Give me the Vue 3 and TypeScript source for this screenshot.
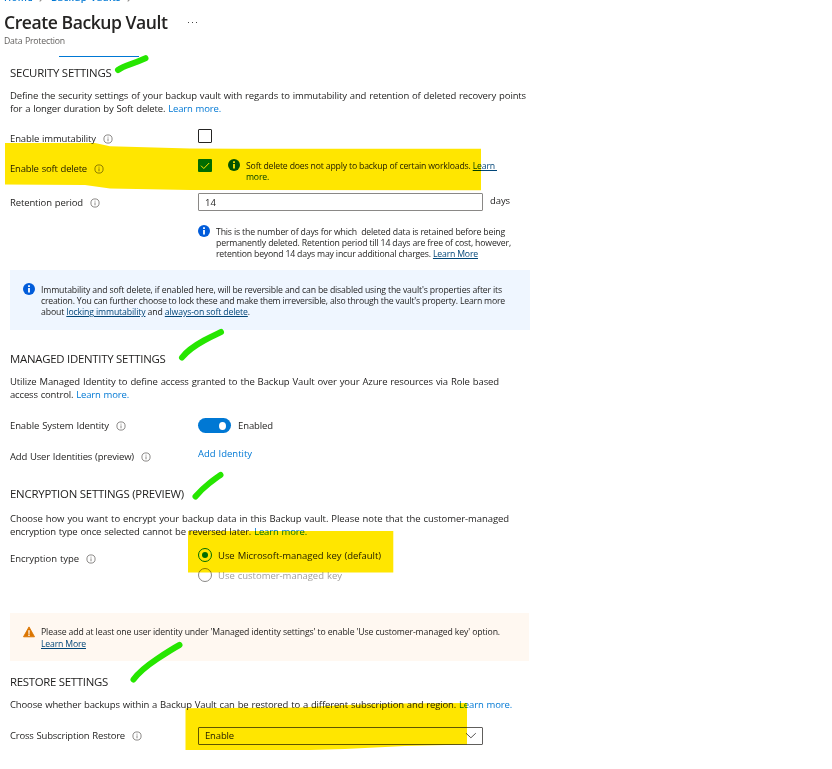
<script setup lang="ts">
import { ref, h, type Directive, type FunctionalComponent } from 'vue'

// Tracks a single text line so that it fills the given measure in pixels.
const vFit: Directive<HTMLElement, number> = {
  mounted(el, { value }) {
    const count = (el.textContent ?? '').length
    const natural = el.getBoundingClientRect().width
    if (count) el.style.letterSpacing = `${((value - natural) / count).toFixed(4)}px`
  },
}

const Hint: FunctionalComponent = () =>
  h('svg', { width: 10, height: 10, viewBox: '0 0 10 10', fill: 'none', stroke: '#6e6c6a' }, [
    h('circle', { cx: 5, cy: 5, r: 4.1, 'stroke-width': 0.8 }),
    h('path', { d: 'M5 4.4v2.9M5 2.7v.9', 'stroke-width': 0.8 }),
  ])

const Info: FunctionalComponent = () =>
  h('svg', { width: 12, height: 12, viewBox: '0 0 12 12' }, [
    h('circle', { cx: 6, cy: 6, r: 6, fill: '#015cda' }),
    h('path', { d: 'M5.1 5h1.8v4.6H5.1zM5.1 2.3h1.8v1.7H5.1z', fill: '#fff' }),
  ])

const immutable = ref(false)
const softDelete = ref(true)
const identity = ref(true)
const days = ref('14')
const keyType = ref<'microsoft' | 'customer'>('microsoft')
</script>

<template>
  <main class="page">
    <header class="head">
      <nav class="crumbs">
        <a v-fit="29">Home</a><i></i><a v-fit="70">Backup Vaults</a><i></i>
      </nav>
      <div class="title-row">
        <h1><span v-fit="163.5">Create Backup Vault</span></h1>
        <span class="more"><b></b><b></b><b></b></span>
      </div>
      <p class="sub"><span v-fit="61">Data Protection</span></p>
      <div class="tab"></div>
    </header>

    <section class="security">
      <h2><span v-fit="101.5">SECURITY SETTINGS</span></h2>
      <p class="para">
        <span v-fit="516">Define the security settings of your backup vault with regards to immutability and retention of deleted recovery points</span>
        <span v-fit="211">for a longer duration by Soft delete. <a>Learn more.</a></span>
      </p>
      <div class="row r-immutable">
        <label><span v-fit="86">Enable immutability</span><Hint /></label>
        <button class="check" :class="{ on: immutable }" @click="immutable = !immutable"></button>
      </div>
      <div class="row r-soft">
        <label><span v-fit="77">Enable soft delete</span><Hint /></label>
        <div class="control">
          <button class="check" :class="{ on: softDelete }" @click="softDelete = !softDelete">
            <svg v-if="softDelete" width="14" height="13" viewBox="0 0 14 13"><path d="M3 6.700l2.800 2.800L11.200 4" fill="none" stroke="#fff" /></svg>
          </button>
          <Info class="soft-info" />
          <p class="note">
            <span v-fit="251">Soft delete does not apply to backup of certain workloads. <u>Learn&nbsp;</u></span>
            <span v-fit="23"><u class="plain">more.</u></span>
          </p>
        </div>
      </div>
      <div class="row r-retention">
        <label><span v-fit="73">Retention period</span><Hint /></label>
        <div class="control">
          <input v-model="days" class="field" />
          <span class="unit"><span v-fit="20">days</span></span>
        </div>
      </div>
      <div class="row r-note">
        <span></span>
        <div class="control">
          <Info />
          <p class="note">
            <span v-fit="289">This is the number of days for which &nbsp;deleted data is retained before being</span>
            <span v-fit="295">permanently deleted. Retention period till 14 days are free of cost, however,</span>
            <span v-fit="262">retention beyond 14 days may incur additional charges. <u>Learn More</u></span>
          </p>
        </div>
      </div>
      <aside class="banner info">
        <Info />
        <p class="note">
          <span v-fit="461">Immutability and soft delete, if enabled here, will be reversible and can be disabled using the vault's properties after its</span>
          <span v-fit="464">creation. You can further choose to lock these and make them irreversible, also through the vault's property. Learn more</span>
          <span v-fit="209">about <u>locking immutability</u> and <u>always-on soft delete</u>.</span>
        </p>
      </aside>
    </section>

    <section class="managed">
      <h2><span v-fit="155.5">MANAGED IDENTITY SETTINGS</span></h2>
      <p class="para">
        <span v-fit="489">Utilize Managed Identity to define access granted to the Backup Vault over your Azure resources via Role based</span>
        <span v-fit="119">access control. <a>Learn more.</a></span>
      </p>
      <div class="row r-system">
        <label><span v-fit="99">Enable System Identity</span><Hint /></label>
        <div class="control">
          <button class="toggle" :class="{ on: identity }" @click="identity = !identity"></button>
          <span class="state"><span v-fit="35">Enabled</span></span>
        </div>
      </div>
      <div class="row r-user">
        <label><span v-fit="124">Add User Identities (preview)</span><Hint /></label>
        <a class="add"><span v-fit="54">Add Identity</span></a>
      </div>
    </section>

    <section class="encryption">
      <h2><span v-fit="174">ENCRYPTION SETTINGS (PREVIEW)</span></h2>
      <p class="para">
        <span v-fit="499">Choose how you want to encrypt your backup data in this Backup vault. Please note that the customer-managed</span>
        <span v-fit="297">encryption type once selected cannot be reversed later. <a>Learn more.</a></span>
      </p>
      <div class="row r-key">
        <label><span v-fit="69">Encryption type</span><Hint /></label>
        <div class="radios">
          <div class="radio" :class="{ on: keyType === 'microsoft' }" @click="keyType = 'microsoft'">
            <i></i><span v-fit="163">Use Microsoft-managed key (default)</span>
          </div>
          <div class="radio disabled"><i></i><span v-fit="124">Use customer-managed key</span></div>
        </div>
      </div>
      <aside class="banner warn">
        <svg width="12" height="12" viewBox="0 0 12 12">
          <path d="M6 .9L11.500 10.800H.5z" fill="#db7500" stroke="#db7500" stroke-width=".9" stroke-linejoin="round" />
          <path d="M5.300 4.200h1.400L6.500 7.900h-1zM5.300 8.600h1.400v1.300H5.300z" fill="#fff" />
        </svg>
        <p class="note">
          <span v-fit="459">Please add at least one user identity under 'Managed identity settings' to enable 'Use customer-managed key' option.</span>
          <span v-fit="45"><u>Learn More</u></span>
        </p>
      </aside>
    </section>

    <section class="restore">
      <h2><span v-fit="98">RESTORE SETTINGS</span></h2>
      <p class="para">
        <span v-fit="502">Choose whether backups within a Backup Vault can be restored to a different subscription and region. <a>Learn more.</a></span>
      </p>
      <div class="row r-cross">
        <label><span v-fit="115">Cross Subscription Restore</span><Hint /></label>
        <div class="field select">
          <span v-fit="29">Enable</span>
          <svg width="12" height="8" viewBox="0 0 12 8"><path d="M1 1.200l4.900 4.600L10.800 1.200" fill="none" stroke="#5a5856" /></svg>
        </div>
      </div>
    </section>

    <svg class="marker" width="832" height="769" viewBox="0 0 832 769" fill="#ffe600">
      <path d="M5 143L95 143L110 146.300L190 148.500L240 148.700L481 148.700V190.300L190 190L110 188.500L85 185L5 184.500Z" />
      <path d="M188 531H393.300V572.500H188Z" />
      <path d="M185.500 708.300L300 707.500L345 705L400 703.500L467 703V744.500L405 746L345 749L310 750H185.500Z" />
    </svg>
    <svg class="marker pen" width="832" height="769" viewBox="0 0 832 769">
      <path d="M118 70Q122 67 130 64.300T145.500 58.200" />
      <path d="M182 357.500C187 351 194 346 204 340.500S217 334 221 332" />
      <path d="M195.500 496.500Q202 489 209 483.500T220.500 475" />
      <path d="M133.500 679.500C139 672 148 665 157 659S174 648 179.500 645" />
    </svg>
  </main>
</template>

<style>
body { margin: 0; background: #fff; }
</style>

<style scoped>
.page {
  position: relative;
  width: 832px;
  height: 769px;
  overflow: hidden;
  background: #fff;
  color: #1f1e1d;
  font: 400 9.5px/14px "Open Sans", "Noto Sans", sans-serif;
  word-spacing: 0.6px;
}
* { box-sizing: border-box; }
h1, h2, p { margin: 0; font-weight: 400; }
span { white-space: nowrap; }
svg { display: block; flex: none; }
a { color: #0078d4; cursor: pointer; }
button { padding: 0; font: inherit; }

.head { height: 57px; padding-left: 4px; display: flex; flex-direction: column; }
.crumbs { display: flex; align-items: center; height: 12px; margin-top: -8px; font-size: 9.5px; font-weight: 600; line-height: 12px; }
.crumbs a { white-space: nowrap; }
.crumbs i { width: 4px; height: 4px; margin: 1px 9px 0 5px; border: solid #8a8886; border-width: 1px 1px 0 0; transform: rotate(45deg); }
.title-row { display: flex; align-items: center; height: 26px; margin-top: 5px; word-spacing: 0; }
h1 { font-size: 17.6px; font-weight: 600; line-height: 26px; color: #252423; }
.more { display: flex; gap: 3px; margin-left: 20px; padding-top: 1px; }
.more b { width: 1px; height: 1px; background: #444; }
.sub { height: 13px; font-size: 8.7px; line-height: 13px; color: #605e5c; }
.tab { width: 80px; height: 1px; margin: 8px 0 0 55px; background: #0078d4; }

section { padding-left: 10px; }
h2 { height: 16px; font-size: 11.4px; line-height: 16px; word-spacing: 0; }
.para { display: flex; flex-direction: column; align-items: flex-start; margin-top: 8px; line-height: 13px; }
.row { display: grid; grid-template-columns: 188px 1fr; align-items: start; }
label { display: flex; align-items: center; gap: 6.5px; }
.control { display: flex; align-items: flex-start; }
.note { display: flex; flex-direction: column; align-items: flex-start; margin-left: 6px; font-size: 8.7px; line-height: 11px; word-spacing: 0; }
u { color: #004578; text-underline-offset: 1px; }
.plain { text-decoration: none; }

.security { padding-top: 8px; height: 293px; }
.r-immutable { height: 29px; margin-top: 14px; }
.r-immutable label { margin-top: 3px; }
.check { display: block; width: 14px; height: 14px; border: 1px solid #252423; border-radius: 1px; background: #fff; }
.check.on { height: 13px; margin-top: 1px; border: 0; background: #0078d4; }
.r-soft { height: 35px; padding-top: 1px; }
.r-soft label { margin-top: 3px; }
.r-soft .check { margin-top: 0; }
.soft-info { margin-left: 16px; }
.r-soft .note { margin-top: 2px; }
.r-retention { height: 32px; }
.r-retention label { margin-top: 3px; }
.field { width: 285px; height: 18px; padding: 0 6px; border: 1px solid #8a8886; border-radius: 1px; outline: 0; background: #fff; color: #1f1e1d; font: inherit; line-height: 16px; }
.unit { margin: 1px 0 0 7px; line-height: 14px; }
.r-note { height: 45px; }
.r-note .note { margin-top: 2px; }
.banner { display: flex; padding: 13px; }
.banner.info { width: 520px; height: 60px; background: #eff6ff; }
.banner.info .note { margin-top: 2px; }

.managed { padding-top: 1px; height: 135px; }
.r-system { height: 28px; margin-top: 17px; }
.r-system label { margin-top: 1px; }
.toggle { width: 33px; height: 15px; padding: 0 5px; border: 0; border-radius: 8px; background: #8a8886; display: flex; align-items: center; }
.toggle::after { content: ""; width: 7px; height: 8px; border-radius: 50%; background: #fff; }
.toggle.on { justify-content: flex-end; background: #0078d4; }
.state { margin: 1px 0 0 7px; }
.r-user { margin-top: 1px; }
.r-user label { margin-top: 3px; }

.encryption { padding-top: 1px; height: 188px; }
.encryption .para { margin-top: 10px; }
.r-key { height: 65px; margin-top: 10px; }
.r-key label { margin-top: 4px; }
.radios { display: flex; flex-direction: column; gap: 6px; }
.radio { display: flex; align-items: center; gap: 6px; height: 14px; }
.radio span { padding-top: 2px; }
.radio i { display: flex; align-items: center; justify-content: center; width: 14px; height: 14px; border: 1px solid #3b3a39; border-radius: 50%; }
.radio.on i { border-color: #0078d4; }
.radio.on i::after { content: ""; width: 6px; height: 6px; border-radius: 50%; background: #0078d4; }
.radio.disabled { color: #a19f9d; }
.radio.disabled i { border-color: #8a8886; }
.banner.warn { width: 519px; height: 48px; background: #fff8f1; }
.banner.warn .note { margin-top: 0; line-height: 12px; }

.restore { padding-top: 1px; }
.r-cross { margin-top: 16px; }
.r-cross label { margin-top: 2px; }
.select { display: flex; align-items: center; justify-content: space-between; padding: 0 5px 0 6px; border-color: #605e5c; }

.marker { position: absolute; left: 0; top: 0; mix-blend-mode: multiply; pointer-events: none; }
.pen { mix-blend-mode: normal; }
.pen path { fill: none; stroke: #26e600; stroke-width: 6; stroke-linecap: round; stroke-linejoin: round; }
</style>
